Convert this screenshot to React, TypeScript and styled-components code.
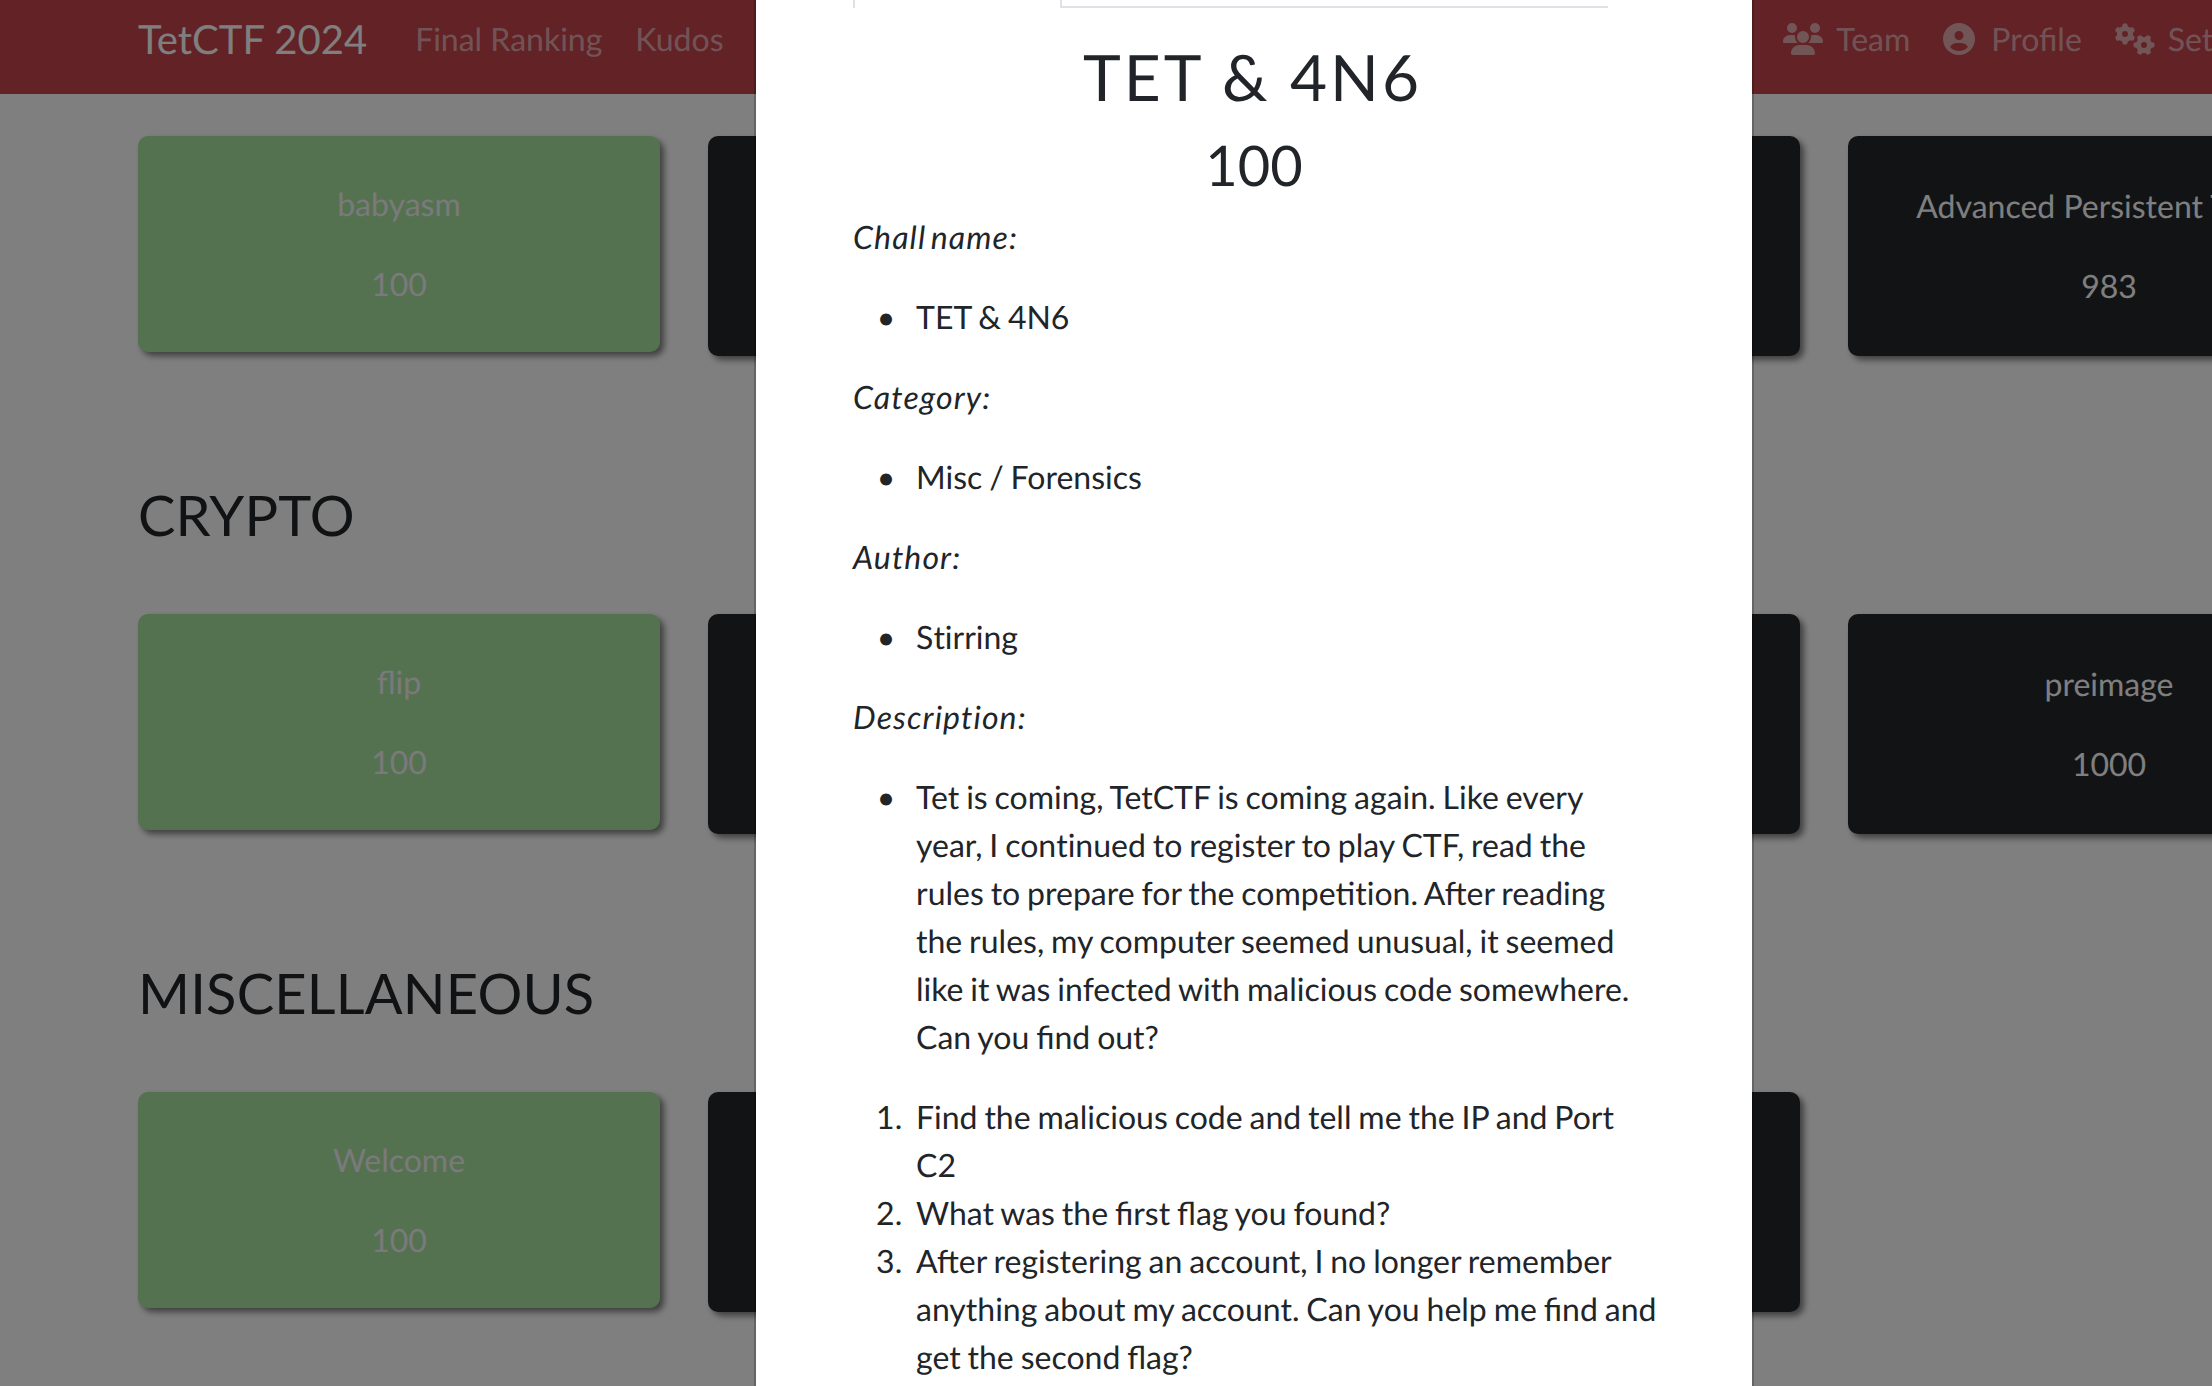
import styled, { createGlobalStyle } from 'styled-components';
import { FaUsers, FaCircleUser, FaGears } from 'react-icons/fa6';

const sections = [
  {
    title: '',
    cards: [
      { name: 'babyasm', score: 100, solved: true },
      { name: '', score: null, solved: false },
      { name: '', score: null, solved: false },
      { name: 'Advanced Persistent Threat', score: 983, solved: false },
    ],
  },
  {
    title: 'CRYPTO',
    cards: [
      { name: 'flip', score: 100, solved: true },
      { name: '', score: null, solved: false },
      { name: '', score: null, solved: false },
      { name: 'preimage', score: 1000, solved: false },
    ],
  },
  {
    title: 'MISCELLANEOUS',
    cards: [
      { name: 'Welcome', score: 100, solved: true },
      { name: '', score: null, solved: false },
      { name: '', score: null, solved: false },
    ],
  },
];

const App = () => {
  return (
    <Page>
      <GlobalStyle />
      <Navbar>
        <NavGroup>
          <Brand>TetCTF 2024</Brand>
          <NavItem>Final Ranking</NavItem>
          <NavItem>Kudos</NavItem>
        </NavGroup>
        <NavGroup>
          <NavItem $gap={13}><FaUsers size={40} />Team</NavItem>
          <NavItem><FaCircleUser size={32} />Profile</NavItem>
          <NavItem $gap={13}><FaGears size={40} />Settings</NavItem>
        </NavGroup>
      </Navbar>
      <Content>
        {sections.map((section) => (
          <section key={section.title}>
            {section.title && <SectionTitle>{section.title}</SectionTitle>}
            <CardRow>
              {section.cards.map((card, i) => (
                <Card key={i} $solved={card.solved}>
                  <CardText>{card.name}</CardText>
                  <CardText>{card.score}</CardText>
                </Card>
              ))}
            </CardRow>
          </section>
        ))}
      </Content>
      <Backdrop />
      <Modal>
        <Tabs>
          <ActiveTab />
          <TabFill />
        </Tabs>
        <ChallTitle>TET &amp; 4N6</ChallTitle>
        <ChallScore>100</ChallScore>
        <Label>Chall name:</Label>
        <Bullets><li>TET &amp; 4N6</li></Bullets>
        <Label>Category:</Label>
        <Bullets><li>Misc / Forensics</li></Bullets>
        <Label>Author:</Label>
        <Bullets><li>S<Plain>ti</Plain>rring</li></Bullets>
        <Label>Description:</Label>
        <Bullets>
          <li>
            Tet is coming, TetCTF is coming again. Like every year, I con<Plain>ti</Plain>nued to
            register to play CTF, read the rules to prepare for the competi<Plain>ti</Plain>on.
            After reading the rules, my computer seemed unusual, it seemed like it was infected
            with malicious code somewhere. Can you find out?
          </li>
        </Bullets>
        <Numbers>
          <li>Find the malicious code and tell me the IP and Port C2</li>
          <li>What was the first flag you found?</li>
          <li>
            After registering an account, I no longer remember anything about my account. Can you
            help me find and get the second flag?
          </li>
        </Numbers>
      </Modal>
    </Page>
  );
};

export default App;

const GlobalStyle = createGlobalStyle`
  html, body {
    margin: 0;
    overflow: hidden;
    background: #fff;
  }
  body {
    font-family: Lato, "Noto Sans", sans-serif;
    font-size: 32px;
    line-height: 48px;
    color: #212529;
    text-rendering: geometricPrecision;
  }
`;

const Page = styled.div`
  position: relative;
  width: 2212px;
  height: 1386px;
  overflow: hidden;
`;

const Navbar = styled.nav`
  box-sizing: border-box;
  width: 2280px;
  height: 94px;
  padding: 0 0 16px 138px;
  background: #c5454d;
  display: flex;
  align-items: center;
  justify-content: space-between;
`;

const NavGroup = styled.div`
  display: flex;
  align-items: center;
  gap: 33px;
`;

const Brand = styled.div`
  font-size: 40px;
  color: #fff;
  margin-right: 15px;
`;

const NavItem = styled.div<{ $gap?: number }>`
  display: flex;
  align-items: center;
  gap: ${(p) => p.$gap ?? 16}px;
  color: rgba(255, 255, 255, 0.55);
`;

const Content = styled.main`
  padding: 42px 0 0 138px;
`;

const SectionTitle = styled.h2`
  margin: 125px 0 66px;
  font-size: 56px;
  font-weight: 400;
  line-height: 67px;
  letter-spacing: 0.2px;
`;

const CardRow = styled.div`
  display: grid;
  grid-template-columns: repeat(4, 570px);
  align-items: start;
`;

const Card = styled.div<{ $solved: boolean }>`
  box-sizing: border-box;
  width: 522px;
  height: ${(p) => (p.$solved ? 216 : 220)}px;
  padding-bottom: 1px;
  border-radius: 10px;
  background: ${(p) => (p.$solved ? '#a8e4a0' : '#24262a')};
  box-shadow: 4px 4px 6px rgba(0, 0, 0, 0.5);
  color: ${(p) => (p.$solved ? '#f5f3f8' : '#fff')};
  display: flex;
  flex-direction: column;
  justify-content: center;
  align-items: center;
  gap: 32px;
  white-space: nowrap;
`;

const CardText = styled.div`
  height: 48px;
`;

const Backdrop = styled.div`
  position: absolute;
  inset: 0;
  background: rgba(0, 0, 0, 0.5);
`;

const Modal = styled.div`
  position: absolute;
  top: 0;
  bottom: 0;
  left: 754px;
  box-sizing: border-box;
  width: 1000px;
  padding: 0 97px;
  background: #fff;
  background-clip: padding-box;
  border-left: 2px solid rgba(0, 0, 0, 0.2);
  border-right: 2px solid rgba(0, 0, 0, 0.2);
  overflow: hidden;
`;

const Tabs = styled.div`
  display: flex;
  width: 755px;
  height: 8px;
  margin-bottom: 30px;
`;

const ActiveTab = styled.div`
  width: 205px;
  border-left: 2px solid #dee2e6;
  border-right: 2px solid #dee2e6;
`;

const TabFill = styled.div`
  flex: 1;
  border-bottom: 2px solid #dee2e6;
`;

const ChallTitle = styled.h2`
  margin: 0 0 16px;
  padding-right: 3px;
  font-size: 64px;
  font-weight: 400;
  line-height: 77px;
  text-align: center;
  letter-spacing: 3px;
`;

const ChallScore = styled.h3`
  margin: 0 0 15px;
  font-size: 56px;
  font-weight: 400;
  line-height: 67px;
  text-align: center;
`;

const Label = styled.p`
  margin: 0 0 32px;
  font-style: italic;
  letter-spacing: 1.1px;
  word-spacing: -4px;
`;

const Plain = styled.span`
  font-variant-ligatures: none;
`;

const Bullets = styled.ul`
  margin: 0 0 32px;
  padding-left: 63px;
  word-spacing: -1.3px;

  li::marker {
    content: "•\\00a0\\00a0\\00a0";
  }
`;

const Numbers = styled.ol`
  margin: 0 -4px 32px 0;
  padding-left: 63px;
  word-spacing: -1.3px;

  li::marker {
    content: counter(list-item) ".\\00a0\\00a0";
  }
`;
